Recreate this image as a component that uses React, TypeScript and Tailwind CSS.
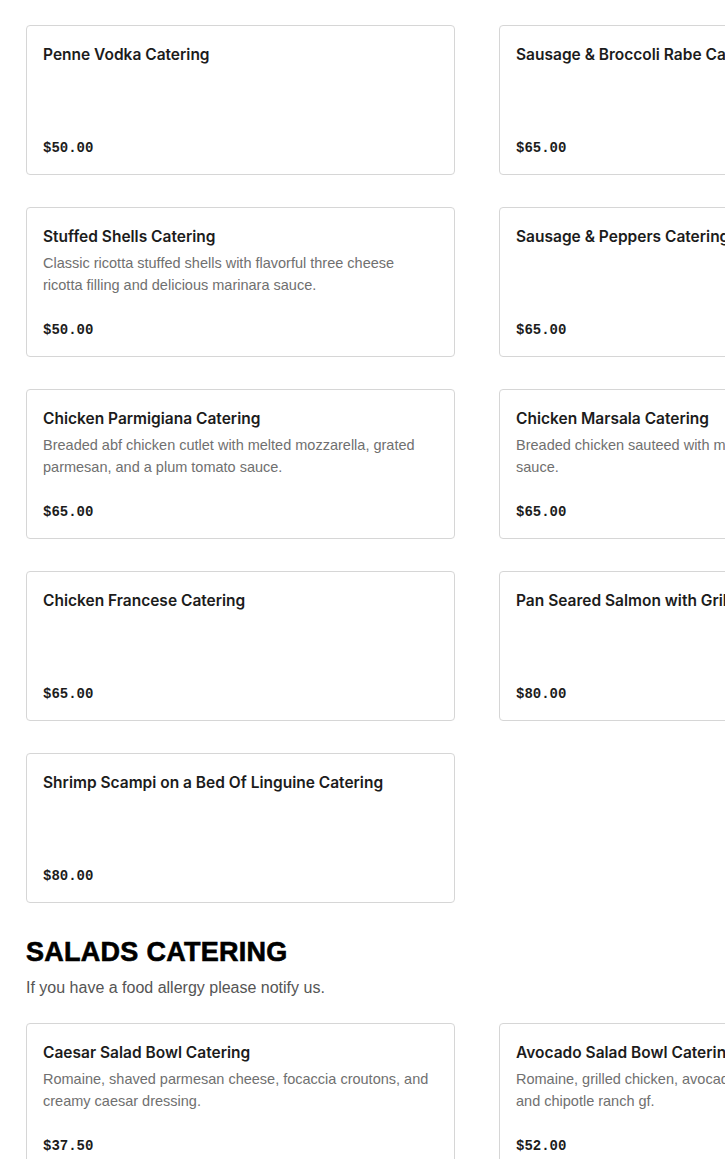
type Item = { name: string; description?: string; price: string };

const entrees: Item[] = [
  { name: "Penne Vodka Catering", price: "$50.00" },
  { name: "Sausage & Broccoli Rabe Catering", price: "$65.00" },
  {
    name: "Stuffed Shells Catering",
    description:
      "Classic ricotta stuffed shells with flavorful three cheese ricotta filling and delicious marinara sauce.",
    price: "$50.00",
  },
  { name: "Sausage & Peppers Catering", price: "$65.00" },
  {
    name: "Chicken Parmigiana Catering",
    description:
      "Breaded abf chicken cutlet with melted mozzarella, grated parmesan, and a plum tomato sauce.",
    price: "$65.00",
  },
  {
    name: "Chicken Marsala Catering",
    description: "Breaded chicken sauteed with mushrooms in marsala wine sauce.",
    price: "$65.00",
  },
  { name: "Chicken Francese Catering", price: "$65.00" },
  { name: "Pan Seared Salmon with Grilled Vegetables Catering", price: "$80.00" },
  { name: "Shrimp Scampi on a Bed Of Linguine Catering", price: "$80.00" },
];

const salads: Item[] = [
  {
    name: "Caesar Salad Bowl Catering",
    description:
      "Romaine, shaved parmesan cheese, focaccia croutons, and creamy caesar dressing.",
    price: "$37.50",
  },
  {
    name: "Avocado Salad Bowl Catering",
    description:
      "Romaine, grilled chicken, avocado, tomatoes, corn, cheddar, and chipotle ranch gf.",
    price: "$52.00",
  },
];

function MenuCard({ item }: { item: Item }) {
  return (
    <div className="flex h-[150px] flex-col rounded-[4px] border border-[#d6d6d6] bg-white px-4 pt-[17px] pb-4">
      <h3 className="whitespace-nowrap font-['Inter',sans-serif] text-[15.5px] leading-6 font-semibold text-[#1c1c1c]">
        {item.name}
      </h3>
      {item.description && (
        <p className="mt-[3px] pr-[6px] text-[14.5px] leading-[22px] text-[#707070]">
          {item.description}
        </p>
      )}
      <div className="mt-auto font-['Liberation_Mono',monospace] text-[14px] leading-5 font-bold text-[#1c1c1c]">
        {item.price}
      </div>
    </div>
  );
}

export default function App() {
  return (
    <div className="min-h-screen w-full overflow-hidden bg-white font-['Liberation_Sans',sans-serif]">
      <div className="w-[960px] px-[26px] pt-[25px]">
        <div className="grid grid-cols-[429px_429px] gap-x-[44px] gap-y-[32px]">
          {entrees.map((item) => (
            <MenuCard key={item.name} item={item} />
          ))}
        </div>

        <section className="mt-[33px]">
          <h2 className="font-['Liberation_Sans',sans-serif] text-[27px] leading-8 font-black tracking-[0.01em] text-black [-webkit-text-stroke:0.6px_black]">
            SALADS CATERING
          </h2>
          <p className="mt-2 text-[16px] leading-6 text-[#555555]">
            If you have a food allergy please notify us.
          </p>
          <div className="mt-[23px] grid grid-cols-[429px_429px] gap-x-[44px] gap-y-[32px]">
            {salads.map((item) => (
              <MenuCard key={item.name} item={item} />
            ))}
          </div>
        </section>
      </div>
    </div>
  );
}
